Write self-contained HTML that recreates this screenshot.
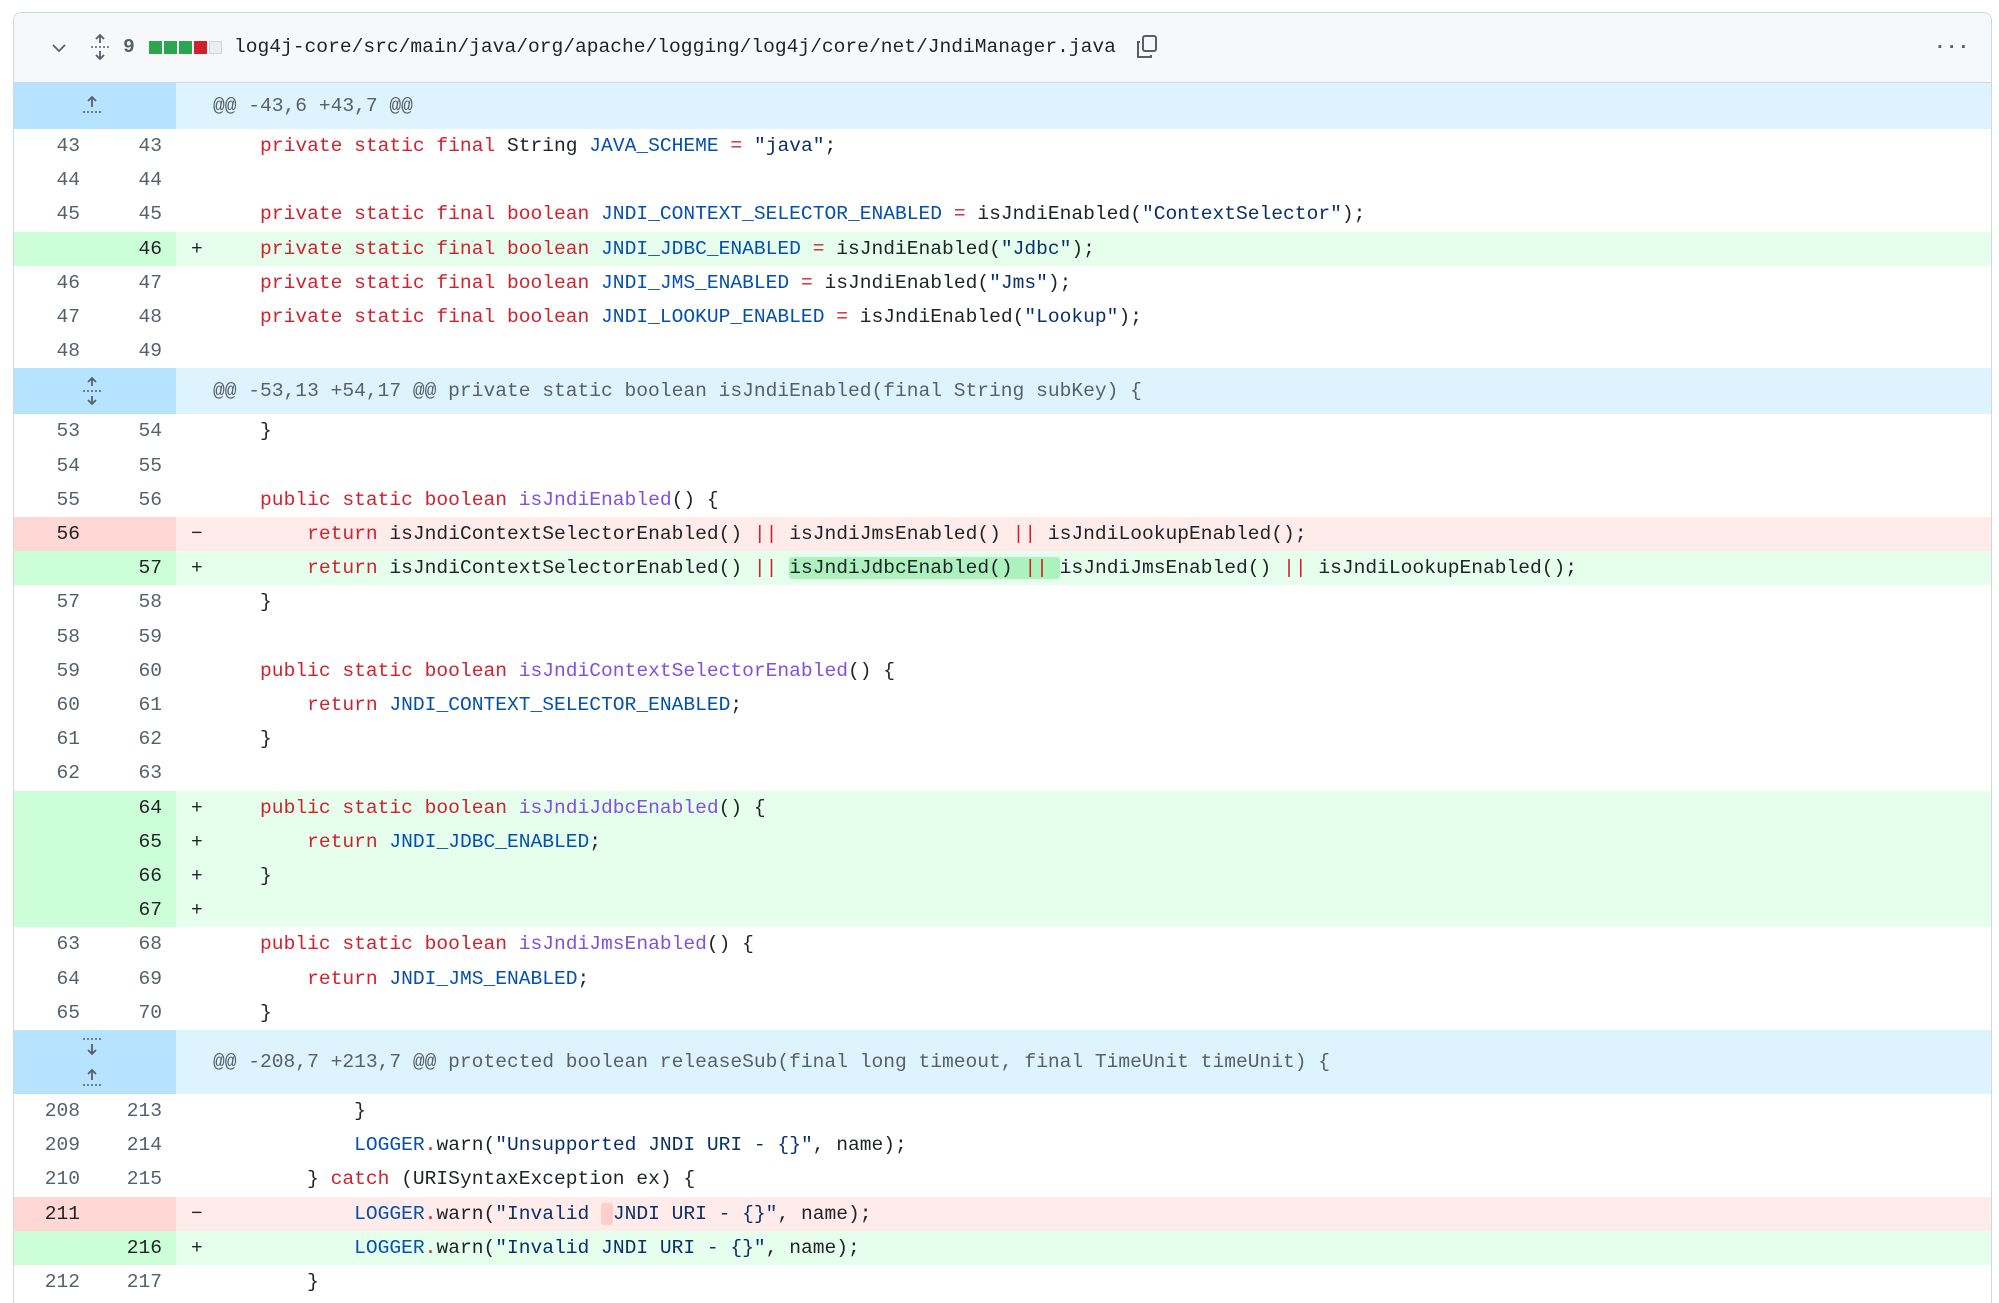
<!DOCTYPE html>
<html><head><meta charset="utf-8"><style>
*{margin:0;padding:0;box-sizing:border-box}
html{width:1999px;height:1303px;overflow:hidden}
body{width:1999px;height:1303px;background:#fff;overflow:hidden;position:relative;font-family:"Liberation Mono",monospace;font-size:19.6px;color:#1f2328}
.box{position:absolute;left:13px;top:12px;width:1979px;height:1291px;border:1px solid #d0d7de;border-bottom:none;border-radius:8px 8px 0 0;overflow:hidden}
.hdr{position:absolute;left:0;top:0;width:100%;height:70px;background:#f6f8fa;border-bottom:1px solid #d0d7de}
.hdr span{position:absolute;top:22px;line-height:24px}
.row{position:absolute;left:0;width:100%;height:34.2px;line-height:34.2px;white-space:pre}
.n1,.n2{position:absolute;top:0;width:82px;text-align:right;color:#57606a;height:100%}
.n1{left:0;width:66px}
.n2{left:66px;width:82px}
.g{position:absolute;left:0;top:0;width:162px;height:100%}
.s{position:absolute;left:177px;top:0}
.c{position:absolute;left:199px;top:0}
.add{background:#e6ffec}.add .g{background:#ccffd8}
.del{background:#ffebe9}.del .g{background:#ffd7d5}
.add .n1,.add .n2,.del .n1,.del .n2{color:#1f2328}
.hunk{position:absolute;left:0;width:100%;background:#ddf4ff;color:#57606a}
.hunk .g{background:#b6e3ff}
.hunk .t{position:absolute;left:199px}
.k{color:#cf222e}.v{color:#0550ae}.f{color:#8250df}.st{color:#0a3069}
.ha{background:#abf2bc;border-radius:3px}
.hd{background:#ffcecb;border-radius:3px}
</style></head><body>
<div class="box">
<div class="hdr">
<svg style="position:absolute;left:37px;top:29px" width="16" height="12" viewBox="0 0 16 12"><path d="M2 3l6 6 6-6" fill="none" stroke="#57606a" stroke-width="1.8"/></svg>
<svg style="position:absolute;left:75px;top:20px" width="22" height="28" viewBox="0 0 22 28"><path d="M11 2v8M7 6l4-4 4 4M11 26v-8M7 22l4 4 4-4" fill="none" stroke="#57606a" stroke-width="1.8"/><path d="M2 14h18" stroke="#57606a" stroke-width="1.6" stroke-dasharray="2 2"/></svg>
<span style="left:109px;font-weight:bold;color:#57606a">9</span>
<div style="position:absolute;left:135px;top:28px;width:13px;height:13px;background:#2da44e"></div>
<div style="position:absolute;left:150px;top:28px;width:13px;height:13px;background:#2da44e"></div>
<div style="position:absolute;left:165px;top:28px;width:13px;height:13px;background:#2da44e"></div>
<div style="position:absolute;left:180px;top:28px;width:13px;height:13px;background:#cf222e"></div>
<div style="position:absolute;left:195px;top:28px;width:13px;height:13px;background:#eaeef2;border:1px solid #d0d7de"></div>
<span style="left:220px;font-size:19.6px">log4j-core/src/main/java/org/apache/logging/log4j/core/net/JndiManager.java</span>
<svg style="position:absolute;left:1120px;top:20px" width="26" height="28" viewBox="0 0 26 28"><rect x="9" y="3" width="13" height="15" rx="2" fill="none" stroke="#57606a" stroke-width="2"/><path d="M6 9H4v15h13v-2" fill="none" stroke="#57606a" stroke-width="2"/></svg>
<span style="left:1920px;color:#57606a;font-weight:bold;top:22px">···</span>
</div>

<div class="hunk" style="top:70px;height:46px;line-height:46px"><div class="g"></div>
<svg style="position:absolute;left:66px;top:10px" width="24" height="24" viewBox="0 0 24 24"><path d="M12 4v10M8 8l4-4 4 4" fill="none" stroke="#57606a" stroke-width="1.8"/><path d="M3 19h18" stroke="#57606a" stroke-width="1.6" stroke-dasharray="2 2"/></svg>
<span class="t">@@ -43,6 +43,7 @@</span></div>

<div class="row" style="top:116px"><div class="g"></div><span class="n1">43</span><span class="n2">43</span><span class="c">    <span class="k">private static final</span> String <span class="v">JAVA_SCHEME</span> <span class="k">=</span> <span class="st">"java"</span>;</span></div>
<div class="row" style="top:150.2px"><div class="g"></div><span class="n1">44</span><span class="n2">44</span></div>
<div class="row" style="top:184.4px"><div class="g"></div><span class="n1">45</span><span class="n2">45</span><span class="c">    <span class="k">private static final boolean</span> <span class="v">JNDI_CONTEXT_SELECTOR_ENABLED</span> <span class="k">=</span> isJndiEnabled(<span class="st">"ContextSelector"</span>);</span></div>
<div class="row add" style="top:218.6px"><div class="g"></div><span class="n2">46</span><span class="s">+</span><span class="c">    <span class="k">private static final boolean</span> <span class="v">JNDI_JDBC_ENABLED</span> <span class="k">=</span> isJndiEnabled(<span class="st">"Jdbc"</span>);</span></div>
<div class="row" style="top:252.8px"><div class="g"></div><span class="n1">46</span><span class="n2">47</span><span class="c">    <span class="k">private static final boolean</span> <span class="v">JNDI_JMS_ENABLED</span> <span class="k">=</span> isJndiEnabled(<span class="st">"Jms"</span>);</span></div>
<div class="row" style="top:287px"><div class="g"></div><span class="n1">47</span><span class="n2">48</span><span class="c">    <span class="k">private static final boolean</span> <span class="v">JNDI_LOOKUP_ENABLED</span> <span class="k">=</span> isJndiEnabled(<span class="st">"Lookup"</span>);</span></div>
<div class="row" style="top:321.2px"><div class="g"></div><span class="n1">48</span><span class="n2">49</span></div>

<div class="hunk" style="top:355.4px;height:46px;line-height:46px"><div class="g"></div>
<svg style="position:absolute;left:66px;top:8px" width="24" height="30" viewBox="0 0 24 30"><path d="M12 2v8M8 6l4-4 4 4M12 28v-8M8 24l4 4 4-4" fill="none" stroke="#57606a" stroke-width="1.8"/><path d="M3 15h18" stroke="#57606a" stroke-width="1.6" stroke-dasharray="2 2"/></svg>
<span class="t">@@ -53,13 +54,17 @@ private static boolean isJndiEnabled(final String subKey) {</span></div>

<div class="row" style="top:401.4px"><div class="g"></div><span class="n1">53</span><span class="n2">54</span><span class="c">    }</span></div>
<div class="row" style="top:435.6px"><div class="g"></div><span class="n1">54</span><span class="n2">55</span></div>
<div class="row" style="top:469.8px"><div class="g"></div><span class="n1">55</span><span class="n2">56</span><span class="c">    <span class="k">public static boolean</span> <span class="f">isJndiEnabled</span>() {</span></div>
<div class="row del" style="top:504px"><div class="g"></div><span class="n1">56</span><span class="s">−</span><span class="c">        <span class="k">return</span> isJndiContextSelectorEnabled() <span class="k">||</span> isJndiJmsEnabled() <span class="k">||</span> isJndiLookupEnabled();</span></div>
<div class="row add" style="top:538.2px"><div class="g"></div><span class="n2">57</span><span class="s">+</span><span class="c">        <span class="k">return</span> isJndiContextSelectorEnabled() <span class="k">||</span> <span class="ha">isJndiJdbcEnabled() <span class="k">||</span> </span>isJndiJmsEnabled() <span class="k">||</span> isJndiLookupEnabled();</span></div>
<div class="row" style="top:572.4px"><div class="g"></div><span class="n1">57</span><span class="n2">58</span><span class="c">    }</span></div>
<div class="row" style="top:606.6px"><div class="g"></div><span class="n1">58</span><span class="n2">59</span></div>
<div class="row" style="top:640.8px"><div class="g"></div><span class="n1">59</span><span class="n2">60</span><span class="c">    <span class="k">public static boolean</span> <span class="f">isJndiContextSelectorEnabled</span>() {</span></div>
<div class="row" style="top:675px"><div class="g"></div><span class="n1">60</span><span class="n2">61</span><span class="c">        <span class="k">return</span> <span class="v">JNDI_CONTEXT_SELECTOR_ENABLED</span>;</span></div>
<div class="row" style="top:709.2px"><div class="g"></div><span class="n1">61</span><span class="n2">62</span><span class="c">    }</span></div>
<div class="row" style="top:743.4px"><div class="g"></div><span class="n1">62</span><span class="n2">63</span></div>
<div class="row add" style="top:777.6px"><div class="g"></div><span class="n2">64</span><span class="s">+</span><span class="c">    <span class="k">public static boolean</span> <span class="f">isJndiJdbcEnabled</span>() {</span></div>
<div class="row add" style="top:811.8px"><div class="g"></div><span class="n2">65</span><span class="s">+</span><span class="c">        <span class="k">return</span> <span class="v">JNDI_JDBC_ENABLED</span>;</span></div>
<div class="row add" style="top:846px"><div class="g"></div><span class="n2">66</span><span class="s">+</span><span class="c">    }</span></div>
<div class="row add" style="top:880.2px"><div class="g"></div><span class="n2">67</span><span class="s">+</span></div>
<div class="row" style="top:914.4px"><div class="g"></div><span class="n1">63</span><span class="n2">68</span><span class="c">    <span class="k">public static boolean</span> <span class="f">isJndiJmsEnabled</span>() {</span></div>
<div class="row" style="top:948.6px"><div class="g"></div><span class="n1">64</span><span class="n2">69</span><span class="c">        <span class="k">return</span> <span class="v">JNDI_JMS_ENABLED</span>;</span></div>
<div class="row" style="top:982.8px"><div class="g"></div><span class="n1">65</span><span class="n2">70</span><span class="c">    }</span></div>

<div class="hunk" style="top:1017px;height:64px;line-height:64px"><div class="g"></div>
<svg style="position:absolute;left:66px;top:6px" width="24" height="52" viewBox="0 0 24 52"><path d="M3 3h18M3 49h18" stroke="#57606a" stroke-width="1.6" stroke-dasharray="2 2"/><path d="M12 8v10M8 14l4 4 4-4M12 44v-10M8 38l4-4 4 4" fill="none" stroke="#57606a" stroke-width="1.8"/></svg>
<span class="t">@@ -208,7 +213,7 @@ protected boolean releaseSub(final long timeout, final TimeUnit timeUnit) {</span></div>

<div class="row" style="top:1081px"><div class="g"></div><span class="n1">208</span><span class="n2">213</span><span class="c">            }</span></div>
<div class="row" style="top:1115.2px"><div class="g"></div><span class="n1">209</span><span class="n2">214</span><span class="c">            <span class="v">LOGGER</span><span class="k">.</span>warn(<span class="st">"Unsupported JNDI URI - {}"</span>, name);</span></div>
<div class="row" style="top:1149.4px"><div class="g"></div><span class="n1">210</span><span class="n2">215</span><span class="c">        } <span class="k">catch</span> (URISyntaxException ex) {</span></div>
<div class="row del" style="top:1183.6px"><div class="g"></div><span class="n1">211</span><span class="s">−</span><span class="c">            <span class="v">LOGGER</span><span class="k">.</span>warn(<span class="st">"Invalid <span class="hd"> </span>JNDI URI - {}"</span>, name);</span></div>
<div class="row add" style="top:1217.8px"><div class="g"></div><span class="n2">216</span><span class="s">+</span><span class="c">            <span class="v">LOGGER</span><span class="k">.</span>warn(<span class="st">"Invalid JNDI URI - {}"</span>, name);</span></div>
<div class="row" style="top:1252px"><div class="g"></div><span class="n1">212</span><span class="n2">217</span><span class="c">        }</span></div>
</div>
</body></html>
